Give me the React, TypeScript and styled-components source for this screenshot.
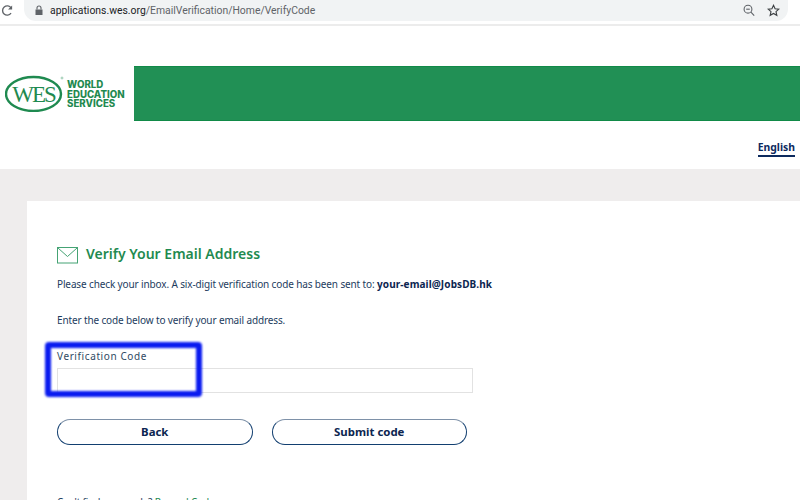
import React from "react";
import styled, { createGlobalStyle } from "styled-components";

const Global = createGlobalStyle`
  html, body { margin: 0; padding: 0; background: #fff; }
  body { font-family: "Noto Sans", "Liberation Sans", sans-serif; }
  #root { width: 800px; height: 500px; overflow: hidden; }
`;

const Page = styled.div`
  position: relative;
  width: 800px;
  height: 500px;
  overflow: hidden;
  display: flex;
  flex-direction: column;
`;

const BrowserBar = styled.div`
  height: 24px;
  flex: none;
  display: flex;
  align-items: flex-start;
  border-bottom: 2px solid #ececec;
  background: #fff;
  box-sizing: content-box;
`;

const Reload = styled.div`
  width: 24px;
  height: 21px;
  flex: none;
  display: flex;
  align-items: center;
  padding-left: 1px;
  box-sizing: border-box;
  color: #5f6368;
`;

const Omnibox = styled.div`
  width: 764px;
  height: 21px;
  flex: none;
  display: flex;
  align-items: center;
  background: #f1f3f4;
  border-radius: 0 0 12px 12px;
  padding: 0 8px 0 10px;
  box-sizing: border-box;
  font-family: "Roboto", sans-serif;
  font-size: 10.4px;
  color: #5f6368;
`;

const Host = styled.span`
  color: #202124;
  margin-left: 6px;
`;

const OmniIcons = styled.div`
  margin-left: auto;
  display: flex;
  gap: 12px;
  align-items: center;
  color: #5f6368;
`;

const HeaderRow = styled.div`
  margin-top: 40px;
  height: 55px;
  flex: none;
  display: flex;
`;

const Logo = styled.div`
  width: 134px;
  flex: none;
  display: flex;
  align-items: center;
  padding-left: 5px;
  box-sizing: border-box;
  color: #1f8a50;
`;

const LogoText = styled.div`
  font-family: "Inter", sans-serif;
  font-weight: 800;
  font-size: 9.7px;
  line-height: 9.7px;
  margin-left: 3px;
  margin-top: 2px;
`;

const GreenBand = styled.div`
  flex: 1;
  background: #219055;
  border-top: 1px solid #118a48;
  border-bottom: 1px solid #118a48;
`;

const LangRow = styled.div`
  height: 48px;
  flex: none;
  display: flex;
  justify-content: flex-end;
  align-items: flex-start;
  padding: 19px 5px 0 0;
  box-sizing: border-box;
`;

const LangLink = styled.a`
  font-family: "Noto Sans", sans-serif;
  font-weight: 700;
  font-size: 10.4px;
  line-height: 15px;
  color: #0d2a5e;
  border-bottom: 2px solid #0d2a5e;
`;

const GrayArea = styled.div`
  flex: 1;
  background: #efeded;
  padding: 32px 0 0 27px;
  min-height: 0;
`;

const Card = styled.div`
  background: #fff;
  height: 340px;
  padding: 44px 0 0 30px;
  box-sizing: border-box;
  overflow: hidden;
`;

const Heading = styled.h1`
  margin: 0;
  display: flex;
  align-items: center;
  gap: 8px;
  height: 20px;
  font-family: "Noto Sans", sans-serif;
  font-size: 14px;
  line-height: 18px;
  font-weight: 600;
  color: #1f8a50;
`;

const HeadingText = styled.span`
  margin-bottom: 2px;
`;

const Para = styled.p<{ $top: number }>`
  margin: ${(p) => p.$top}px 0 0;
  font-family: "Noto Sans", sans-serif;
  font-size: 10px;
  line-height: 14px;
  color: #1d3c5e;
  letter-spacing: -0.13px;
`;

const Strong = styled.strong`
  color: #0c2550;
  font-weight: 700;
  letter-spacing: 0.1px;
`;

const FieldLabel = styled.label`
  display: block;
  margin-top: 22px;
  font-family: "Noto Sans", sans-serif;
  font-size: 10px;
  line-height: 14px;
  letter-spacing: 0.6px;
  color: #2f4a63;
`;

const CodeInput = styled.div`
  margin-top: 5px;
  width: 416px;
  height: 25px;
  box-sizing: border-box;
  border: 1px solid #e2e2e2;
  background: #fff;
`;

const ButtonRow = styled.div`
  display: flex;
  gap: 19px;
  margin-top: 26px;
`;

const PillButton = styled.button`
  width: 195.5px;
  height: 26px;
  box-sizing: border-box;
  padding: 0 0 2px;
  background: #fff;
  border: 1px solid #123f70;
  border-top-color: #7e91a8;
  border-radius: 13px;
  font-family: "Noto Sans", sans-serif;
  font-size: 11.4px;
  font-weight: 700;
  color: #0c2550;
`;

const Resend = styled.p`
  margin: 50px 0 0;
  font-family: "Noto Sans", sans-serif;
  font-size: 10px;
  line-height: 14px;
  letter-spacing: -0.15px;
  color: #1d3c5e;
`;

const ResendLink = styled.span`
  color: #1f8a50;
`;

const Highlight = styled.div`
  position: absolute;
  left: 45px;
  top: 342px;
  width: 157px;
  height: 55px;
  box-sizing: border-box;
  border: 6px solid #0a1bf0;
  border-radius: 4px;
  filter: blur(1px);
  pointer-events: none;
`;

export default function App() {
  return (
    <Page>
      <Global />
      <BrowserBar>
        <Reload>
          <svg width="12" height="13" viewBox="0 0 14 15" fill="none" stroke="currentColor" strokeWidth="1.6">
            <path d="M11.7 10.6A5.4 5.4 0 1 1 11.8 4.6" />
            <path d="M13 1.6v4.8H8.2z" fill="currentColor" stroke="none" />
          </svg>
        </Reload>
        <Omnibox>
          <svg width="10" height="11" viewBox="0 0 10 11">
            <path d="M1.5 4.5h7v5.5h-7z" fill="#5f6368" />
            <path d="M3 4.5V3a2 2 0 0 1 4 0v1.5" fill="none" stroke="#5f6368" strokeWidth="1.1" />
          </svg>
          <Host>applications.wes.org</Host>/EmailVerification/Home/VerifyCode
          <OmniIcons>
            <svg width="12" height="13" viewBox="0 0 12 13" fill="none" stroke="currentColor" strokeWidth="1.1">
              <circle cx="5" cy="5.2" r="3.9" />
              <path d="M7.9 8.1L11.2 11.6" />
              <path d="M3.2 5.2h3.6" />
            </svg>
            <svg width="13" height="13" viewBox="0 0 14 14" fill="none" stroke="#3c4043" strokeWidth="1.2">
              <path d="M7 1.4l1.7 3.7 4 .4-3 2.7.9 4L7 10.2l-3.6 2 .9-4-3-2.7 4-.4z" />
            </svg>
          </OmniIcons>
        </Omnibox>
      </BrowserBar>
      <HeaderRow>
        <Logo>
          <svg width="59" height="37" viewBox="0 0 59 37" fill="none">
            <ellipse cx="28.5" cy="19" rx="27.5" ry="17" stroke="#1f8a50" strokeWidth="2.4" />
            <text x="28.5" y="27" textAnchor="middle" fontFamily="Liberation Serif" fontSize="23" letterSpacing="-2" fill="#1f8a50">WES</text>
            <circle cx="57" cy="3" r="1" stroke="#1f8a50" strokeWidth="0.4" />
          </svg>
          <LogoText>
            WORLD
            <br />
            EDUCATION
            <br />
            SERVICES
          </LogoText>
        </Logo>
        <GreenBand />
      </HeaderRow>
      <LangRow>
        <LangLink>English</LangLink>
      </LangRow>
      <GrayArea>
        <Card>
          <Heading>
            <svg width="21" height="17" viewBox="0 0 21 17" fill="none" stroke="#45a374" strokeWidth="1">
              <rect x="0.5" y="0.5" width="20" height="15.5" />
              <path d="M1 1l9.5 8.5L20 1" />
            </svg>
            <HeadingText>Verify Your Email Address</HeadingText>
          </Heading>
          <Para $top={12}>
            Please check your inbox. A six-digit verification code has been sent to: <Strong>your-email@JobsDB.hk</Strong>
          </Para>
          <Para $top={22}>Enter the code below to verify your email address.</Para>
          <FieldLabel>Verification Code</FieldLabel>
          <CodeInput />
          <ButtonRow>
            <PillButton>Back</PillButton>
            <PillButton>Submit code</PillButton>
          </ButtonRow>
          <Resend>
            Can't find your code? <ResendLink>Resend Code</ResendLink>
          </Resend>
        </Card>
      </GrayArea>
      <Highlight />
    </Page>
  );
}
